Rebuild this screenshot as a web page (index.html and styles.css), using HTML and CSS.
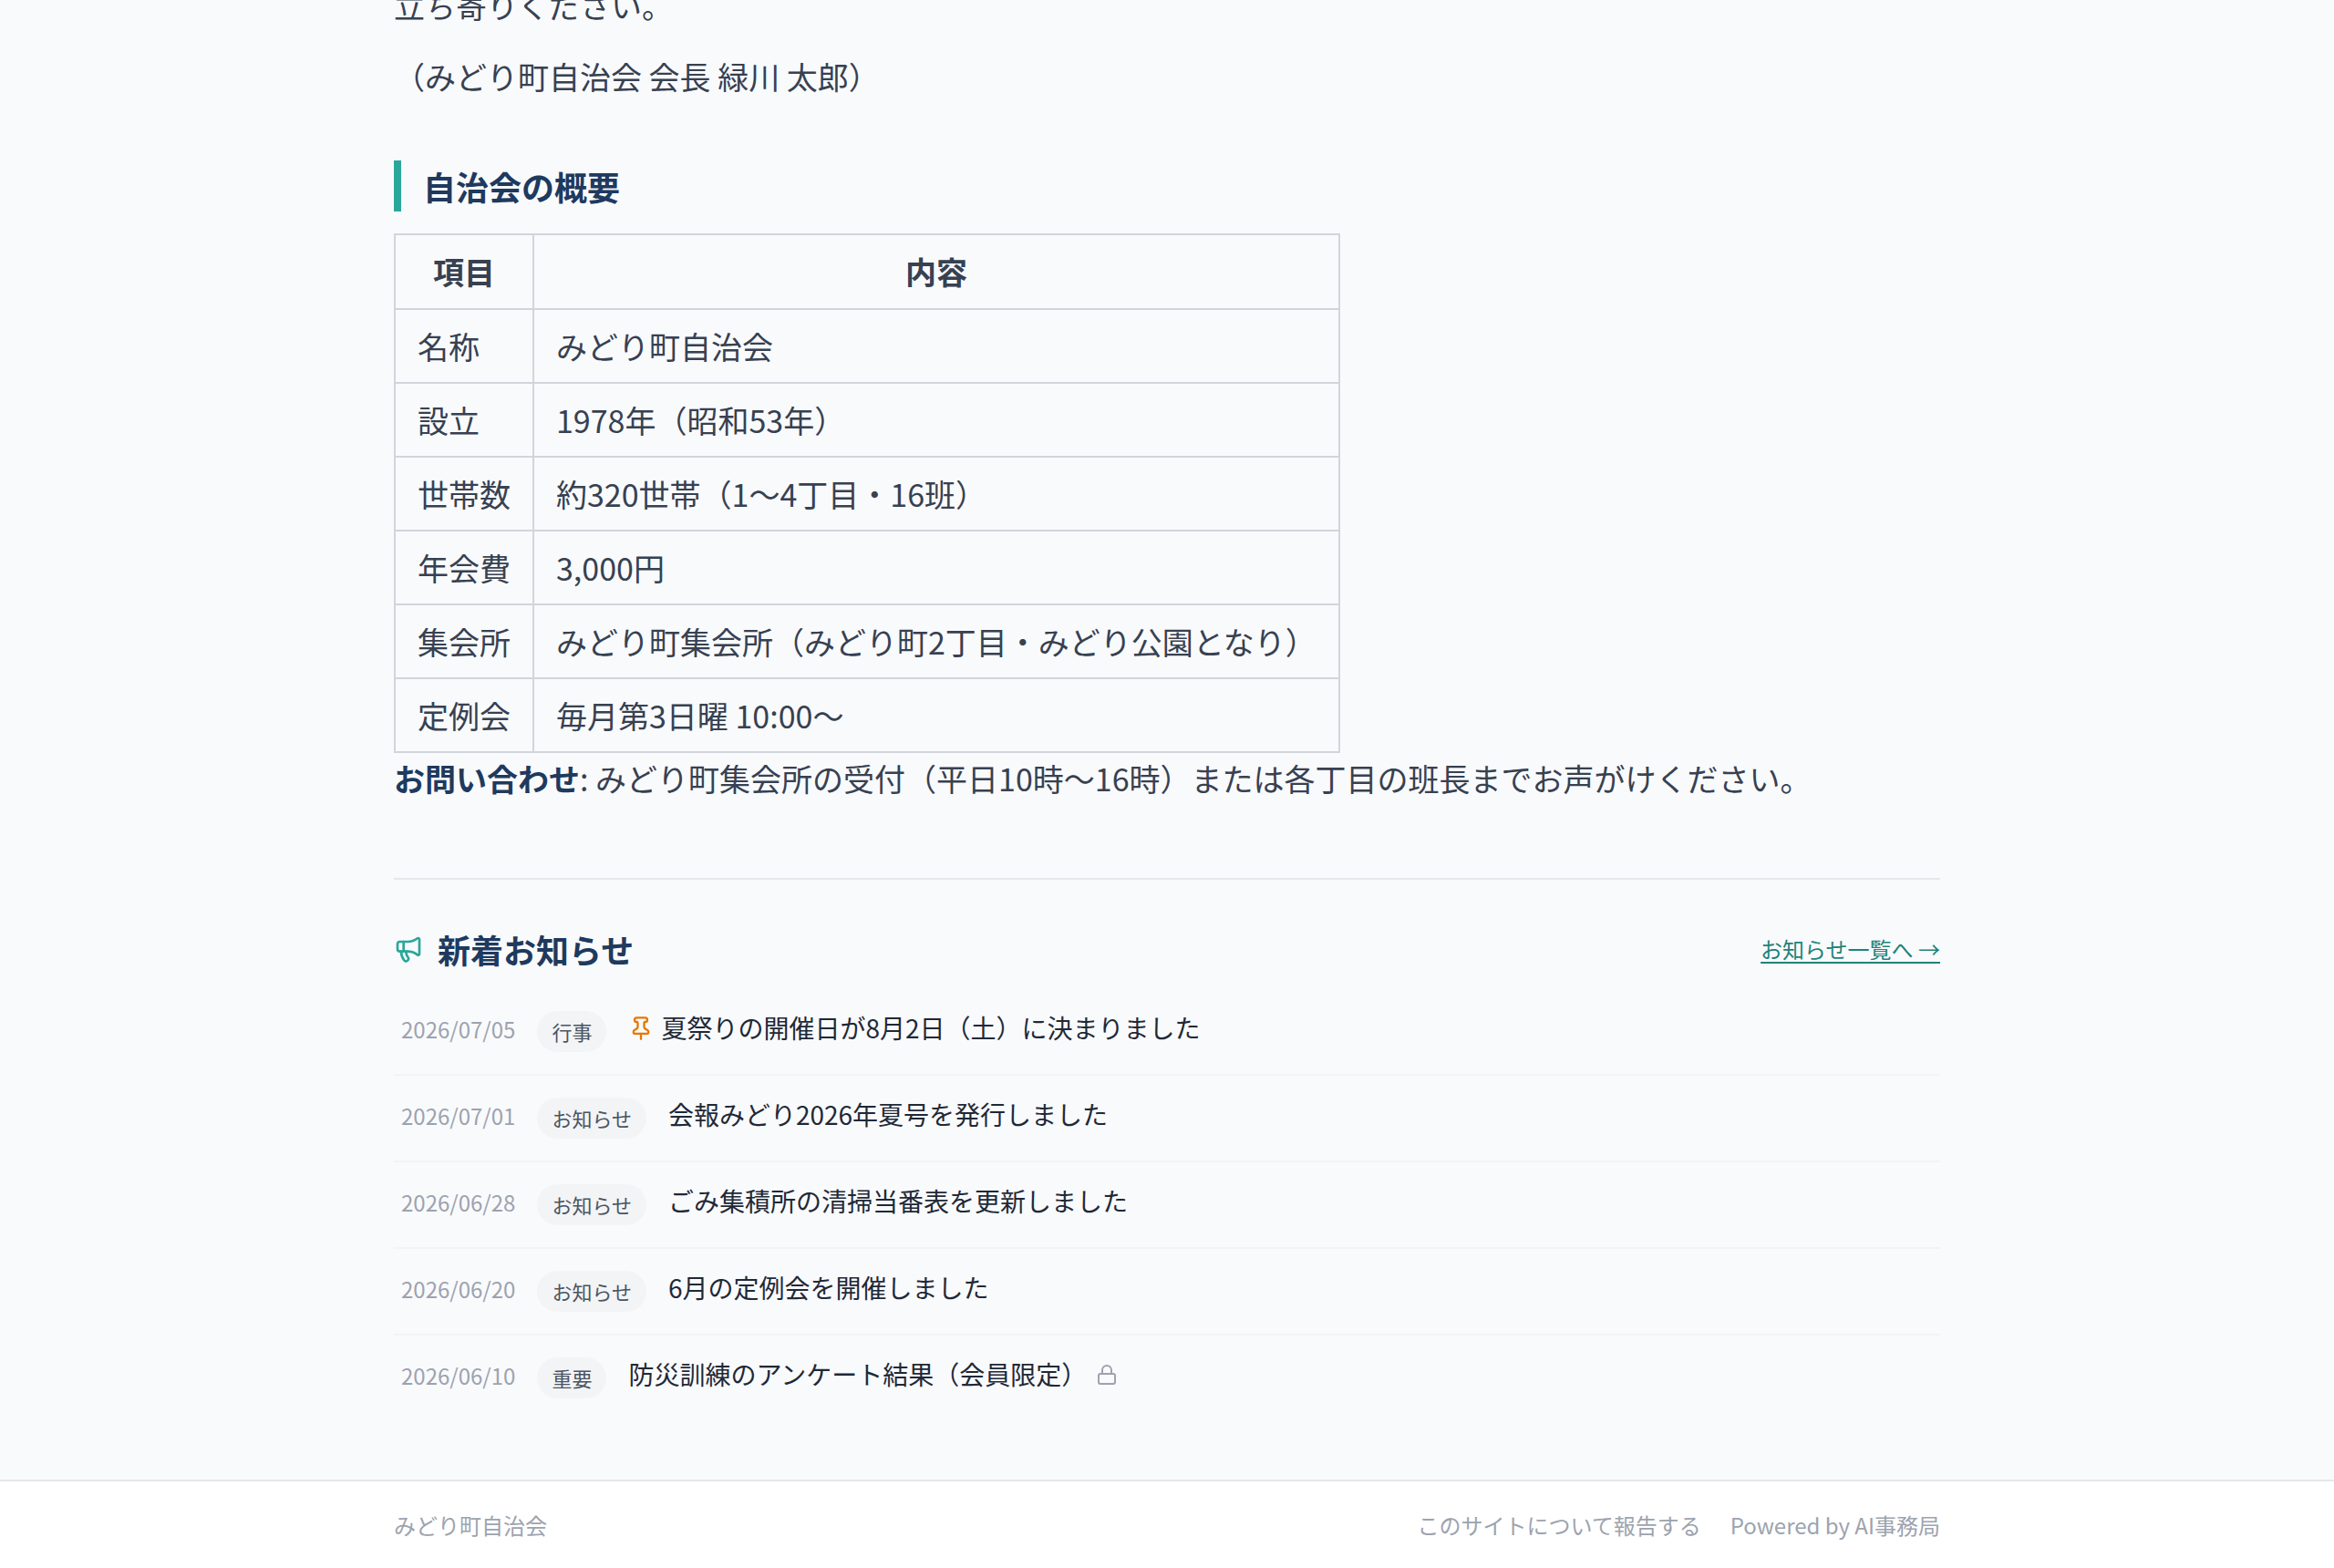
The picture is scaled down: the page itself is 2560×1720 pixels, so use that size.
FILE: index.html
```html
<!DOCTYPE html>
<html lang="ja">
<head>
<meta charset="utf-8">
<meta name="viewport" content="width=device-width, initial-scale=1">
<title>みどり町自治会</title>
<link rel="stylesheet" href="styles.css">
</head>
<body>
<main class="container main">
  <article class="article">
    <p>立ち寄りください。</p>
    <p>（みどり町自治会 会長 緑川 太郎）</p>
    <h2 class="article-heading">自治会の概要</h2>
    <table class="overview">
      <thead>
        <tr><th scope="col">項目</th><th scope="col">内容</th></tr>
      </thead>
      <tbody>
        <tr><td>名称</td><td>みどり町自治会</td></tr>
        <tr><td>設立</td><td>1978年（昭和53年）</td></tr>
        <tr><td>世帯数</td><td>約320世帯（1〜4丁目・16班）</td></tr>
        <tr><td>年会費</td><td>3,000円</td></tr>
        <tr><td>集会所</td><td>みどり町集会所（みどり町2丁目・みどり公園となり）</td></tr>
        <tr><td>定例会</td><td>毎月第3日曜 10:00〜</td></tr>
      </tbody>
    </table>
    <p><strong>お問い合わせ</strong>: みどり町集会所の受付（平日10時〜16時）または各丁目の班長までお声がけください。</p>
  </article>

  <section class="news">
    <div class="news-head">
      <h2 class="news-title">
        <svg class="icon-news" viewBox="0 0 24 24" aria-hidden="true">
          <path d="M11 6a13 13 0 0 0 8.4-2.8A1 1 0 0 1 21 4v12a1 1 0 0 1-1.6.8A13 13 0 0 0 11 14H5a2 2 0 0 1-2-2V8a2 2 0 0 1 2-2z"/>
          <path d="M6 14a12 12 0 0 0 2.4 7.2 2 2 0 0 0 3.2-2.4A8 8 0 0 1 10 14"/>
          <path d="M8 6v8"/>
        </svg>
        新着お知らせ
      </h2>
      <a class="news-more" href="#">お知らせ一覧へ →</a>
    </div>
    <ul class="news-list">
      <li>
        <a class="news-item" href="#">
          <time class="date" datetime="2026-07-05">2026/07/05</time>
          <span class="tag">行事</span>
          <span class="title">
            <svg class="icon-pin" viewBox="0 0 24 24" aria-hidden="true">
              <path d="M12 17v5"/>
              <path d="M9 10.76a2 2 0 0 1-1.11 1.79l-1.78.9A2 2 0 0 0 5 15.24V16a1 1 0 0 0 1 1h12a1 1 0 0 0 1-1v-.76a2 2 0 0 0-1.11-1.79l-1.78-.9A2 2 0 0 1 15 10.76V7a1 1 0 0 1 1-1 2 2 0 0 0 0-4H8a2 2 0 0 0 0 4 1 1 0 0 1 1 1z"/>
            </svg>
            夏祭りの開催日が8月2日（土）に決まりました
          </span>
        </a>
      </li>
      <li>
        <a class="news-item" href="#">
          <time class="date" datetime="2026-07-01">2026/07/01</time>
          <span class="tag">お知らせ</span>
          <span class="title">会報みどり2026年夏号を発行しました</span>
        </a>
      </li>
      <li>
        <a class="news-item" href="#">
          <time class="date" datetime="2026-06-28">2026/06/28</time>
          <span class="tag">お知らせ</span>
          <span class="title">ごみ集積所の清掃当番表を更新しました</span>
        </a>
      </li>
      <li>
        <a class="news-item" href="#">
          <time class="date" datetime="2026-06-20">2026/06/20</time>
          <span class="tag">お知らせ</span>
          <span class="title">6月の定例会を開催しました</span>
        </a>
      </li>
      <li>
        <a class="news-item" href="#">
          <time class="date" datetime="2026-06-10">2026/06/10</time>
          <span class="tag">重要</span>
          <span class="title">
            防災訓練のアンケート結果（会員限定）
            <svg class="icon-lock" viewBox="0 0 24 24" aria-hidden="true">
              <rect x="3" y="11" width="18" height="11" rx="2"/>
              <path d="M7 11V7a5 5 0 0 1 10 0v4"/>
            </svg>
          </span>
        </a>
      </li>
    </ul>
  </section>
</main>

<footer class="footer">
  <div class="container footer-row">
    <span>みどり町自治会</span>
    <div class="footer-links">
      <a href="#">このサイトについて報告する</a>
      <a href="#">Powered by AI事務局</a>
    </div>
  </div>
</footer>
</body>
</html>
```
FILE: styles.css
```css
* {
  box-sizing: border-box;
}

body {
  margin: 0;
  background: #f9fafc;
  color: #374151;
  font-family: "Noto Sans CJK JP", sans-serif;
  font-size: 34px;
  line-height: 56px;
}

h2,
p,
ul {
  margin: 0;
  padding: 0;
}

a {
  color: inherit;
  text-decoration: none;
}

svg {
  flex: none;
  fill: none;
  stroke: currentColor;
  stroke-width: 2;
  stroke-linecap: round;
  stroke-linejoin: round;
}

.container {
  max-width: 1792px;
  margin: 0 auto;
  padding: 0 48px;
}

.main {
  padding-bottom: 65px;
}

/* Article: its opening line sits partly above the top of the page */
.article {
  margin-top: -22px;
  padding-bottom: 81px;
}

.article p + p {
  margin-top: 22px;
}

.article strong {
  color: #1e3a5f;
}

.article-heading {
  margin: 64px 0 24px;
  padding-left: 24px;
  border-left: 8px solid #2aa79b;
  color: #1e3a5f;
  font-size: 36px;
  line-height: 56px;
}

.overview {
  border-collapse: collapse;
  line-height: 49px;
}

.overview th,
.overview td {
  padding: 15px 24px;
  border: 2px solid #d1d5db;
}

.overview th {
  padding-bottom: 16px;
}

/* News */
.news {
  border-top: 2px solid #e5e7eb;
  padding-top: 48px;
}

.news-head {
  display: flex;
  justify-content: space-between;
  align-items: center;
  margin-bottom: 16px;
}

.news-title {
  display: flex;
  align-items: center;
  gap: 16px;
  color: #1e3a5f;
  font-size: 36px;
  line-height: 56px;
}

.icon-news {
  width: 32px;
  height: 32px;
  color: #2aa79b;
}

.news-more {
  color: #1f8378;
  font-size: 24px;
  line-height: 36px;
  text-decoration: underline;
  text-decoration-thickness: 2px;
  text-underline-offset: 4px;
}

.news-list {
  list-style: none;
}

.news-list li + li {
  border-top: 2px solid #f3f4f6;
}

.news-item {
  display: flex;
  align-items: flex-start;
  gap: 24px;
  padding: 24px 8px;
}

.date {
  color: #9ca3af;
  font-size: 24px;
  line-height: 40px;
}

.tag {
  padding: 0 16px;
  border-radius: 24px;
  background: #f3f4f6;
  color: #4b5563;
  font-size: 22px;
  line-height: 45px;
}

.title {
  display: flex;
  align-items: center;
  gap: 8px;
  color: #1f2937;
  font-size: 28px;
  line-height: 36px;
}

.icon-pin {
  width: 28px;
  height: 28px;
  margin-top: 2px;
  color: #e67700;
}

.icon-lock {
  width: 24px;
  height: 24px;
  margin: 2px 0 0 2px;
  color: #9ca3af;
}

/* Footer */
.footer {
  border-top: 2px solid #e5e7eb;
  background: #fff;
  color: #9ca3af;
  font-size: 24px;
  line-height: 36px;
}

.footer-row {
  display: flex;
  justify-content: space-between;
  padding-top: 30px;
  padding-bottom: 30px;
}

.footer-links {
  display: flex;
  gap: 32px;
}
```
